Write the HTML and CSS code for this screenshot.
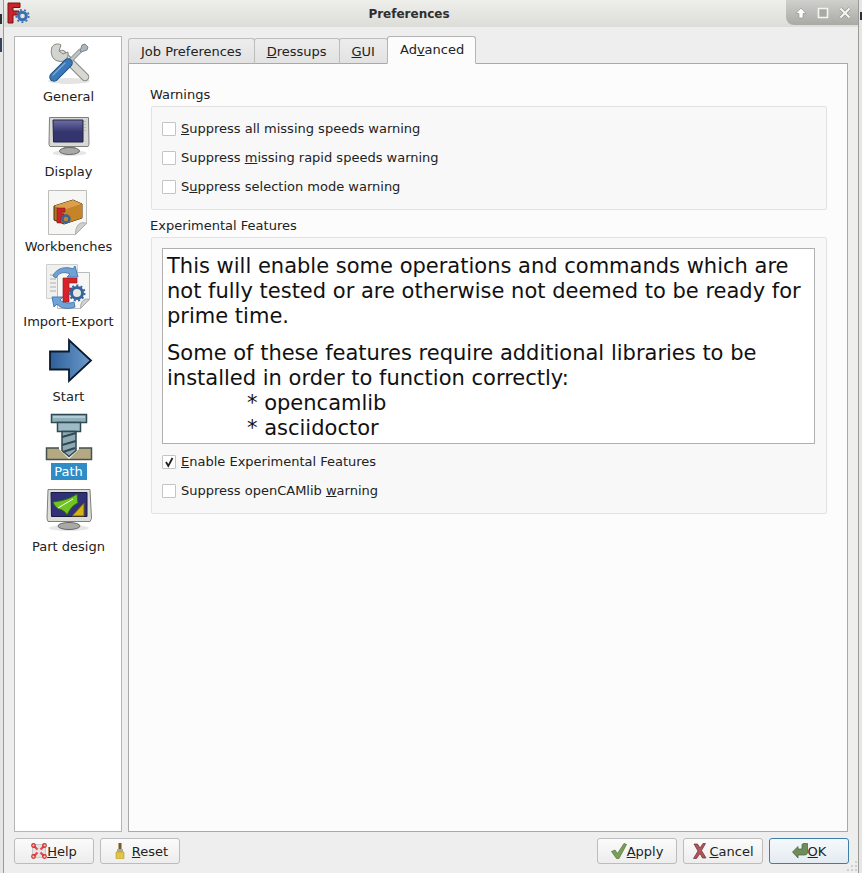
FILE: index.html
```html
<!DOCTYPE html>
<html lang="en">
<head>
<meta charset="utf-8">
<title>Preferences</title>
<link rel="stylesheet" href="styles.css">
</head>
<body>
<div class="window">
  <header class="titlebar">
    <svg class="app-icon" viewBox="0 0 24 24" width="24" height="24">
      <path d="M2 2h12v4.500H7V10h6v4H7v8H2z" fill="#c8242b" stroke="#7a1014" stroke-width="1"/>
      <circle cx="16.500" cy="15" r="6.200" fill="none" stroke="#3d6fb0" stroke-width="1.800" stroke-dasharray="2 2.300"/>
      <circle cx="16.500" cy="15" r="3.800" fill="#e4e4e0" stroke="#3d6fb0" stroke-width="3"/>
    </svg>
    <h1 class="title">Preferences</h1>
    <div class="wm-buttons">
      <svg viewBox="0 0 12 12" width="12" height="12"><path d="M6 1 11 6.500H8V11H4V6.500H1z" fill="#fff" stroke="#8a8a86" stroke-width=".6"/></svg>
      <svg viewBox="0 0 12 12" width="12" height="12"><path d="M1.500 1.500h9v9h-9z" fill="#a8a8a4" stroke="#f4f4f2" stroke-width="1.600"/></svg>
      <svg viewBox="0 0 12 12" width="12" height="12"><path d="M1.500 1.500l9 9M10.500 1.500l-9 9" stroke="#8f8f8b" stroke-width="3.400" fill="none"/><path d="M1.500 1.500l9 9M10.500 1.500l-9 9" stroke="#f6f6f4" stroke-width="2.200" fill="none"/></svg>
    </div>
  </header>
  <div class="content">
    <div class="main">
      <nav class="sidebar">
        <div class="page">
          <svg class="page-icon" viewBox="0 0 48 48" width="48" height="48">
            <ellipse cx="24" cy="39" rx="21" ry="3" fill="#e4e4e4"/>
            <path d="M17 12 40 35" stroke="#85877f" stroke-width="8.500" stroke-linecap="round"/>
            <path d="M17 12 40 35" stroke="#d6d8d4" stroke-width="6.500" stroke-linecap="round"/>
            <path d="M7 5c-2 6 0 13 6 14 6 2 11-2 10-9l-5 2-4-3 2-6C13 1 9 2 7 5z" fill="#d2d4d0" stroke="#85877f"/>
            <path d="M24 20 36 8" stroke="#7f8686" stroke-width="4.500"/>
            <path d="M24 20 36 8" stroke="#bcc3c6" stroke-width="3"/>
            <path d="M35 9l2-6 3-1 3 3-1 3-6 2z" fill="#a9b6c0" stroke="#7f8686"/>
            <path d="M23 21 9 35" stroke="#1c4a80" stroke-width="9.500" stroke-linecap="round"/>
            <path d="M23 21 9 35" stroke="#3a78b8" stroke-width="7.500" stroke-linecap="round"/>
            <path d="M20 21 8 33" stroke="#79a8d6" stroke-width="1.500" stroke-linecap="round"/>
          </svg>
          <span class="page-label">General</span>
        </div>
        <div class="page">
          <svg class="page-icon" viewBox="0 0 48 48" width="48" height="48">
            <defs><linearGradient id="scr" x1="0" x2="0" y1="0" y2="1"><stop offset="0" stop-color="#6e6ea6"/><stop offset=".55" stop-color="#34346e"/></linearGradient></defs>
            <ellipse cx="24.500" cy="36" rx="17" ry="3" fill="#e6e6e6"/>
            <path d="M19 29h11l1 4H18z" fill="#9c9c98"/>
            <ellipse cx="24.500" cy="34" rx="10" ry="3.500" fill="#a9aaa6" stroke="#666"/>
            <path d="M4.500.500h39l.5 27-1 2H5l-1-2z" fill="#d8d8d5" stroke="#7e7e7a"/>
            <path d="M8 3h30v22H8.500z" fill="url(#scr)" stroke="#22223e"/>
            <path d="M40 4v12" stroke="#9a9a96" stroke-dasharray="1 2"/>
          </svg>
          <span class="page-label">Display</span>
        </div>
        <div class="page">
          <svg class="page-icon" viewBox="0 0 48 48" width="48" height="48">
            <path d="M3.500-1.500h38v33l-11 11h-27z" fill="#f6f6f4" stroke="#bdbdb9"/>
            <path d="M41.500 31.500c-4-2-11-1-11 11z" fill="#cfcfcb" stroke="#aaa"/>
            <path d="M9 14 28 8l9 4v14l-18 6-10-4z" fill="#b5761f" stroke="#4a2e08"/>
            <path d="M9 14 28 8l9 4-18 6z" fill="#dca04a"/>
            <path d="M19 18l18-6v14l-18 6z" fill="#c58428"/>
            <path d="M12 16h8v4h-4v2h3v3h-3v6h-4z" fill="#c8242b" stroke="#7a1014" stroke-width=".5"/>
            <circle cx="21" cy="27" r="3.500" fill="none" stroke="#36649c" stroke-width="2.500"/>
          </svg>
          <span class="page-label">Workbenches</span>
        </div>
        <div class="page">
          <svg class="page-icon" viewBox="0 0 48 48" width="48" height="48">
            <path d="M1.500-2.500h31v34h-31z" fill="#f0f0ee" stroke="#cfcfcf"/>
            <path d="M5 8h7M5 12h6M5 16h6M5 20h6M5 24h6" stroke="#cfcfcf" stroke-width="2"/>
            <path d="M12.500 5.500h32v27l-9 9h-23z" fill="#f7f7f5" stroke="#bbb"/>
            <path d="M44.500 32.500c-3-1-9-1-9 9z" fill="#d0d0cc" stroke="#aaa"/>
            <path d="M8 9c3-8 13-10 20-7l2-3 3 11-11 0 3-3C19 4 13 6 11 11z" fill="#6fa2d6" stroke="#4a7cb0"/>
            <path d="M30 40c-8 3-15 1-18-3l-3 3-2-10 11 0-3 3c3 3 9 4 14 2z" fill="#6fa2d6" stroke="#4a7cb0"/>
            <path d="M18 11h14v5h-8v5h6v4h-6v10h-6z" fill="#d8232b" stroke="#8a1218" stroke-width=".6"/>
            <circle cx="32" cy="26" r="5.500" fill="#e8e8e4" stroke="#36649c" stroke-width="3"/>
            <circle cx="32" cy="26" r="7.500" fill="none" stroke="#36649c" stroke-width="2" stroke-dasharray="2 2.300"/>
          </svg>
          <span class="page-label">Import-Export</span>
        </div>
        <div class="page">
          <svg class="page-icon" viewBox="0 0 48 48" width="48" height="48">
            <defs><linearGradient id="arrow" x1="0" x2="1"><stop offset="0" stop-color="#2d5f9a"/><stop offset="1" stop-color="#6c9bcb"/></linearGradient></defs>
            <path d="M5 9.500h19V-2l22 20.500L24 39V27.500H5z" fill="url(#arrow)" stroke="#0e1a2a" stroke-width="1.800"/>
          </svg>
          <span class="page-label">Start</span>
        </div>
        <div class="page">
          <svg class="page-icon" viewBox="0 0 48 48" width="48" height="48">
            <path d="M1.500 31h14l8.500 8 8.500-8h14v11.500h-45z" fill="#b5a983" stroke="#45504f" stroke-width="1.500"/>
            <path d="M14 30h20v2l-10 10-10-10z" fill="#fff"/>
            <path d="M6.500-2.500h35v8h-35z" fill="#8fb1bd" stroke="#2f4a52" stroke-width="1.500"/>
            <path d="M8 0h32" stroke="#c2d6dd" stroke-width="1.500"/>
            <path d="M12.500 5.500h23v9h-23z" fill="#9dbbc5" stroke="#2f4a52" stroke-width="1.500"/>
            <path d="M17 14.500h14v19l-7 6-7-6z" fill="#8fa9b3" stroke="#2f4a52" stroke-width="1.500"/>
            <path d="M17 20l14-4M17 28l14-4M18 35l12-4" stroke="#2f4a52" stroke-width="2.200"/>
          </svg>
          <span class="page-label page-label-selected">Path</span>
        </div>
        <div class="page">
          <svg class="page-icon" viewBox="0 0 48 48" width="48" height="48">
            <ellipse cx="24" cy="36" rx="20" ry="3" fill="#e6e6e6"/>
            <ellipse cx="24" cy="34" rx="11" ry="3.500" fill="#a9aaa6" stroke="#666"/>
            <path d="M3-2.500h42l1.500 29-1.500 3H3l-1-3z" fill="#dcdcd9" stroke="#7e7e7a"/>
            <path d="M6 .500h36v24H6.500z" fill="#31317a" stroke="#1a1a40"/>
            <path d="M8 10c5-1 13-1 24-8l1 9c-5 2-8 6-11 12-2-4-5-5-8-6-3-1-5-4-6-7z" fill="#6fc423" stroke="#2f6a10"/>
            <path d="M13 16 28 7" stroke="#fff" stroke-width="1"/>
            <path d="M39 11v13H27z" fill="#d4b21c" stroke="#6c5c10"/>
          </svg>
          <span class="page-label">Part design</span>
        </div>
      </nav>
      <section class="prefs">
        <div class="tabs">
          <span class="tab"><u>J</u>ob Preferences</span>
          <span class="tab"><u>D</u>ressups</span>
          <span class="tab"><u>G</u>UI</span>
          <span class="tab tab-active">Ad<u>v</u>anced</span>
        </div>
        <div class="tab-panel">
          <div class="group">
            <div class="group-title">Warnings</div>
            <div class="group-box">
              <label class="check"><span class="box"></span><span><u>S</u>uppress all missing speeds warning</span></label>
              <label class="check"><span class="box"></span><span>Suppress <u>m</u>issing rapid speeds warning</span></label>
              <label class="check"><span class="box"></span><span>S<u>u</u>ppress selection mode warning</span></label>
            </div>
          </div>
          <div class="group">
            <div class="group-title">Experimental Features</div>
            <div class="group-box group-box-exp">
              <div class="text-area">
                <p>This will enable some operations and commands which are not fully tested or are otherwise not deemed to be ready for prime time.</p>
                <p>Some of these features require additional libraries to be installed in order to function correctly:</p>
                <p class="indent">* opencamlib</p>
                <p class="indent">* asciidoctor</p>
              </div>
              <label class="check"><span class="box box-checked"><svg viewBox="0 0 12 12" width="12" height="12"><path d="M3 6l2.300 4L9.500 2" fill="none" stroke="#222" stroke-width="1.800"/></svg></span><span><u>E</u>nable Experimental Features</span></label>
              <label class="check"><span class="box"></span><span>Suppress openCAMlib <u>w</u>arning</span></label>
            </div>
          </div>
        </div>
      </section>
    </div>
    <footer class="buttons">
      <button class="btn" type="button">
        <svg viewBox="0 0 16 16" width="16" height="16"><rect x="1.500" y="1.500" width="13" height="13" rx="2" fill="#e4e4e4" stroke="#c8c8c8"/><path d="M3 3l3.500 3.500M13 3 9.500 6.500M3 13l3.500-3.500M13 13 9.500 9.500" stroke="#e8484a" stroke-width="2.200"/><g fill="none" stroke="#d42a2a" stroke-width="1.200"><circle cx="2.500" cy="2.500" r="1.800"/><circle cx="13.500" cy="2.500" r="1.800"/><circle cx="2.500" cy="13.500" r="1.800"/><circle cx="13.500" cy="13.500" r="1.800"/></g></svg><span><u>H</u>elp</span>
      </button>
      <button class="btn btn-reset" type="button">
        <svg viewBox="0 0 16 16" width="16" height="16"><path d="M6.500 0h3v6h-3z" fill="#7b5a20"/><path d="M5 6h6v3H5z" fill="#a8a8a4"/><path d="M4 9h8v6.500H4z" fill="#e2c545" stroke="#b89a20" stroke-width=".6"/></svg><span><u>R</u>eset</span>
      </button>
      <span class="spacer"></span>
      <button class="btn" type="button">
        <svg viewBox="0 0 16 16" width="16" height="16"><path d="M.500 8.500 4 7l2.500 3.500L13 .500l2.500 1L8 15.500H5.500z" fill="#7a9f5a" stroke="#4f7436" stroke-width=".7"/></svg><span><u>A</u>pply</span>
      </button>
      <button class="btn btn-cancel" type="button">
        <svg viewBox="0 0 16 16" width="16" height="16"><path d="M2 1h3.500L8 5l3-4.500h2.500L9.500 7.500 14 15h-3.500L8 10.500 4.500 15.500H1.500L6 8z" fill="#b0555a" stroke="#6f2a2e" stroke-width=".7"/></svg><span><u>C</u>ancel</span>
      </button>
      <button class="btn btn-default" type="button">
        <svg viewBox="0 0 16 16" width="16" height="16"><path d="M.500 9 6 3.500V6h4V1.500l1-1h4.500V9c0 2-1 3-3 3H6v3z" fill="#6f8d58" stroke="#44603a" stroke-width=".7"/></svg><span><u>O</u>K</span>
      </button>
    </footer>
  </div>
  <svg class="size-grip" viewBox="0 0 12 12" width="12" height="12"><path d="M9 0h2v2H9zM5 4h2v2H5zM9 4h2v2H9zM1 8h2v2H1zM5 8h2v2H5zM9 8h2v2H9z" fill="#cfcfcf"/></svg>
</div>
</body>
</html>
```
FILE: styles.css
```css
* { box-sizing: border-box; }
html, body { margin: 0; padding: 0; height: 100%; }
body {
  background:
    linear-gradient(#2b2f36, #2b2f36) 0 14px / 2px 10px no-repeat,
    linear-gradient(#34425e, #34425e) 0 38px / 2px 14px no-repeat,
    linear-gradient(#2b2f36, #2b2f36) 860px 12px / 2px 8px no-repeat,
    #e6e6e4;
  font-family: "DejaVu Sans", sans-serif;
  font-size: 13px;
  color: #222;
  overflow: hidden;
}
.window {
  height: 873px;
  margin: 0 3px;
  display: flex;
  flex-direction: column;
  position: relative;
  background: #eeeeee;
  border-left: 1px solid #9a9a96;
  border-right: 1px solid #9a9a96;
}
.titlebar {
  height: 27px;
  flex: none;
  display: flex;
  align-items: center;
  position: relative;
  background: linear-gradient(#eeeeea, #dcdcd8);
}
.app-icon { position: absolute; left: 2px; top: 1px; }
.title {
  flex: 1;
  margin: 0;
  padding-right: 44px;
  text-align: center;
  font-size: 12px;
  font-weight: bold;
  color: #2e2e2e;
}
.wm-buttons {
  position: absolute;
  right: 0;
  top: 0;
  width: 72px;
  height: 25px;
  padding-left: 9px;
  display: flex;
  align-items: center;
  gap: 10px;
  background: linear-gradient(#cfcfcb, #a9a9a5);
  border-bottom-left-radius: 8px;
}
.content {
  flex: 1;
  padding: 9px 10px 9px 10px;
  display: flex;
  flex-direction: column;
  min-height: 0;
}
.main { flex: 1; display: flex; gap: 6px; min-height: 0; }
.sidebar {
  width: 108px;
  flex: none;
  padding: 5px 0 0 1px;
  display: flex;
  flex-direction: column;
  align-items: center;
  background: #fff;
  border: 1px solid #b5b5b5;
}
.page {
  height: 75px;
  flex: none;
  width: 100%;
  display: flex;
  flex-direction: column;
  align-items: center;
}
.page-icon { flex: none; display: block; overflow: visible; }
.page-label {
  margin-top: -2px;
  line-height: 17px;
  padding: 0 2px;
  color: #222;
}
.page-label-selected { width: 36px; text-align: center; padding: 0; background: #308cc6; color: #fff; }
.prefs { flex: 1; display: flex; flex-direction: column; min-width: 0; }
.tabs { display: flex; height: 28px; flex: none; align-items: flex-end; position: relative; z-index: 1; }
.tab {
  height: 26px;
  padding: 0 12px;
  display: flex;
  align-items: center;
  white-space: pre;
  background: linear-gradient(#ededed, #e2e2e2);
  border: 1px solid #bdbdbd;
  border-bottom: 1px solid #a9a9a9;
  border-radius: 3px 3px 0 0;
  margin-right: -1px;
}
.tab-active {
  height: 28px;
  margin-right: 0;
  padding-right: 11px;
  background: #fcfcfc;
  border-color: #b5b5b5;
  border-bottom-color: #fcfcfc;
  padding-bottom: 2px;
}
.tab-panel {
  flex: 1;
  margin-top: -1px;
  padding: 23px 20px 0 22px;
  background: #fcfcfc;
  border: 1px solid #a9a9a9;
}
.group-title { line-height: 16px; margin-left: -1px; }
.group + .group { margin-top: 8px; }
.group-box {
  margin-top: 3px;
  padding: 7px 11px 8px 10px;
  background: #f8f8f8;
  border: 1px solid #e2e2e2;
  border-radius: 2px;
}
.group-box-exp { padding-top: 10px; padding-bottom: 8px; }
.check { display: flex; align-items: center; gap: 5px; height: 29px; white-space: nowrap; }
.box {
  width: 14px;
  height: 14px;
  flex: none;
  display: flex;
  align-items: center;
  justify-content: center;
  background: #fff;
  border: 1px solid #c4c4c4;
  border-radius: 1px;
}
.text-area {
  height: 196px;
  margin-bottom: 3px;
  padding: 5px 4px 0;
  background: #fff;
  border: 1px solid #b0b0b0;
  font-size: 21px;
  line-height: 25px;
  color: #111;
  overflow: hidden;
}
.text-area p { margin: 0; }
.text-area p + p { margin-top: 12px; }
.text-area p.indent { margin: 0; padding-left: 80px; }
.buttons { flex: none; height: 26px; margin: 6px -1px 0 0; display: flex; gap: 6px; }
.spacer { flex: 1; }
.btn {
  width: 80px;
  height: 26px;
  padding: 0;
  display: flex;
  align-items: center;
  justify-content: center;
  font: inherit;
  color: #222;
  background: linear-gradient(#fbfbfb, #ededed);
  border: 1px solid #bcbcbc;
  border-radius: 3px;
}
.btn-default { border-color: #3d7fa8; background: linear-gradient(#f6f9fb, #e3ebf1); }
.btn-reset svg { margin-right: 4px; }
.btn-cancel svg { margin-right: 1px; }
.size-grip { position: absolute; right: 0; bottom: 0; }
```
